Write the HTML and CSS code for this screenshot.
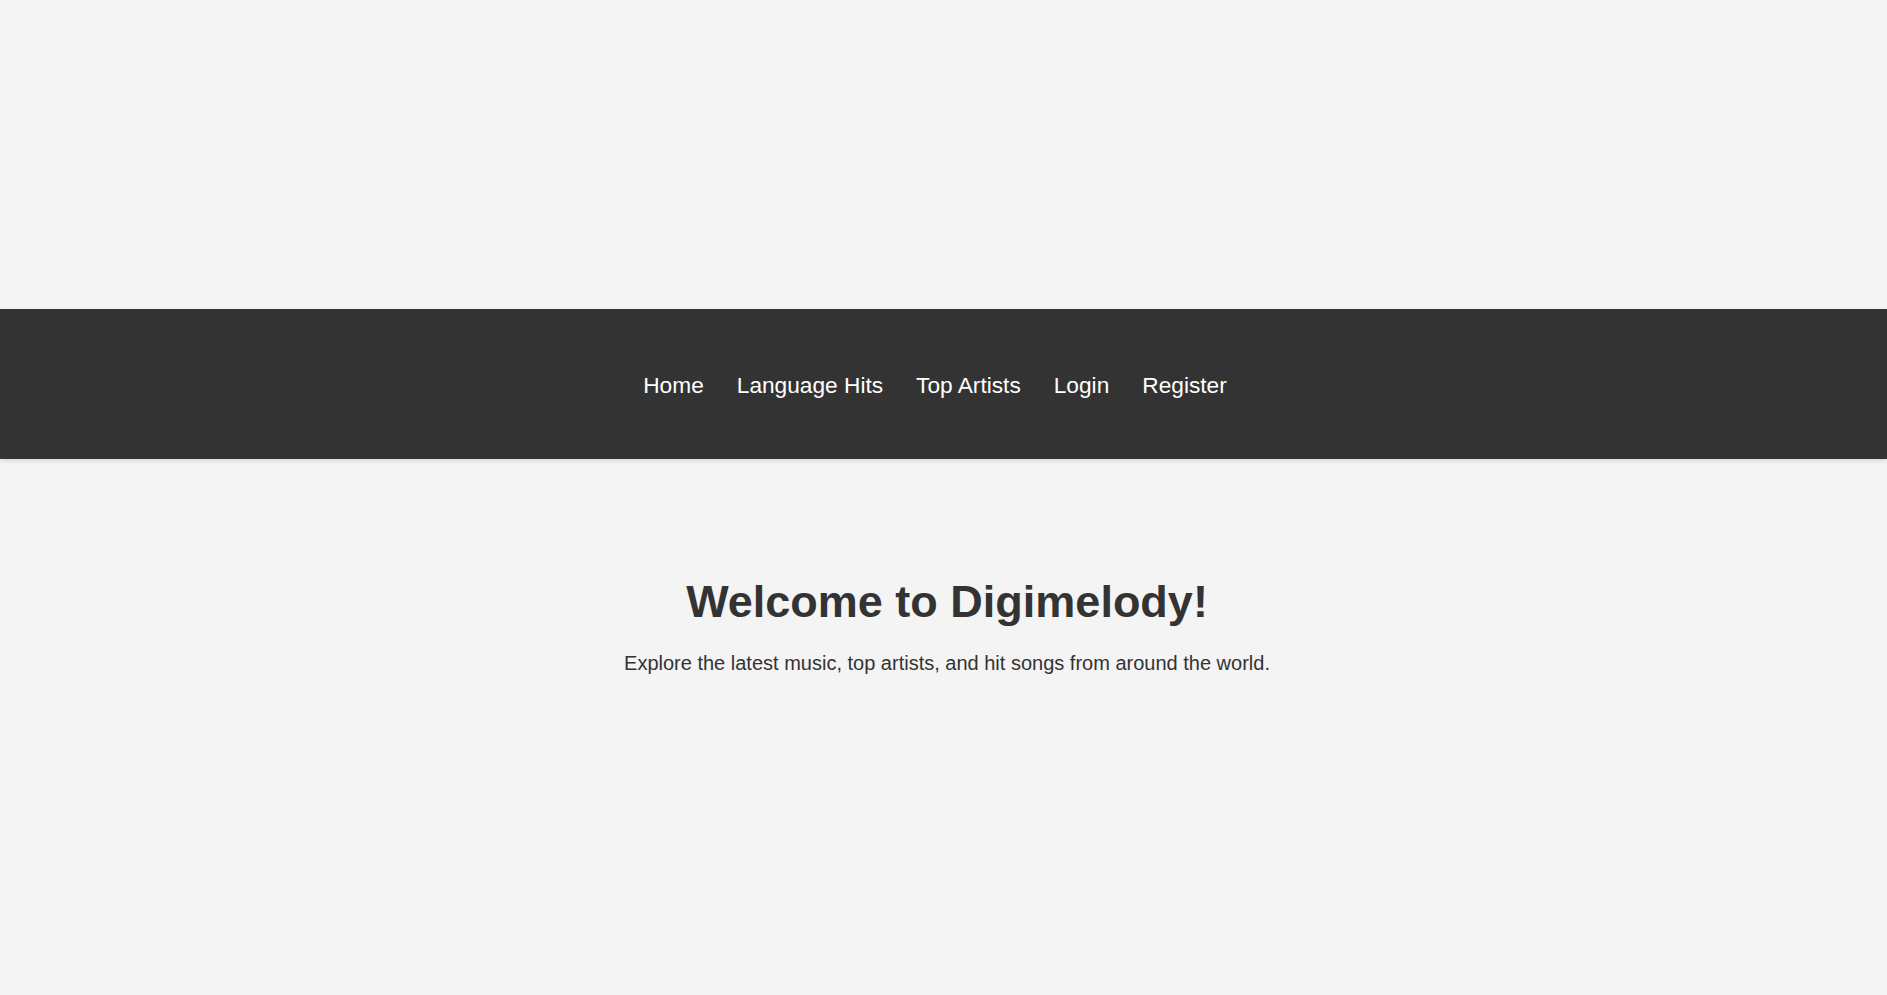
FILE: index.html
```html
<!DOCTYPE html>
<html lang="en">
<head>
<meta charset="utf-8">
<title>Digimelody</title>
<link rel="stylesheet" href="styles.css">
</head>
<body>
<header class="site-header">
  <nav class="main-nav">
    <ul class="nav-list">
      <li><a href="#">Home</a></li>
      <li><a href="#">Language Hits</a></li>
      <li><a href="#">Top Artists</a></li>
      <li><a href="#">Login</a></li>
      <li><a href="#">Register</a></li>
    </ul>
  </nav>
</header>
<main class="hero">
  <h1 class="hero-title">Welcome to Digimelody!</h1>
  <p class="hero-text">Explore the latest music, top artists, and hit songs from around the world.</p>
</main>
</body>
</html>
```
FILE: styles.css
```css
html, body {
  margin: 0;
  padding: 0;
}
body {
  background: #f4f4f4;
  font-family: "Liberation Sans", Arial, sans-serif;
  color: #333;
  min-height: 995px;
}
.site-header {
  padding-top: 309px;
}
.main-nav {
  height: 150px;
  background: #333;
  box-shadow: 0 2px 5px rgba(0, 0, 0, 0.12);
  display: flex;
  align-items: center;
  justify-content: center;
  box-sizing: border-box;
  padding-top: 2px;
}
.nav-list {
  list-style: none;
  margin: 0;
  padding: 0 17px 0 0;
  display: flex;
  gap: 33px;
}
.nav-list a {
  color: #fff;
  text-decoration: none;
  font-size: 22.7px;
}
.hero {
  text-align: center;
  padding: 117px 0 0 7px;
}
.hero-title {
  margin: 0;
  font-size: 45px;
  font-weight: bold;
  color: #333;
}
.hero-text {
  margin: 24px 0 0;
  font-size: 20px;
  color: #333;
}
```
